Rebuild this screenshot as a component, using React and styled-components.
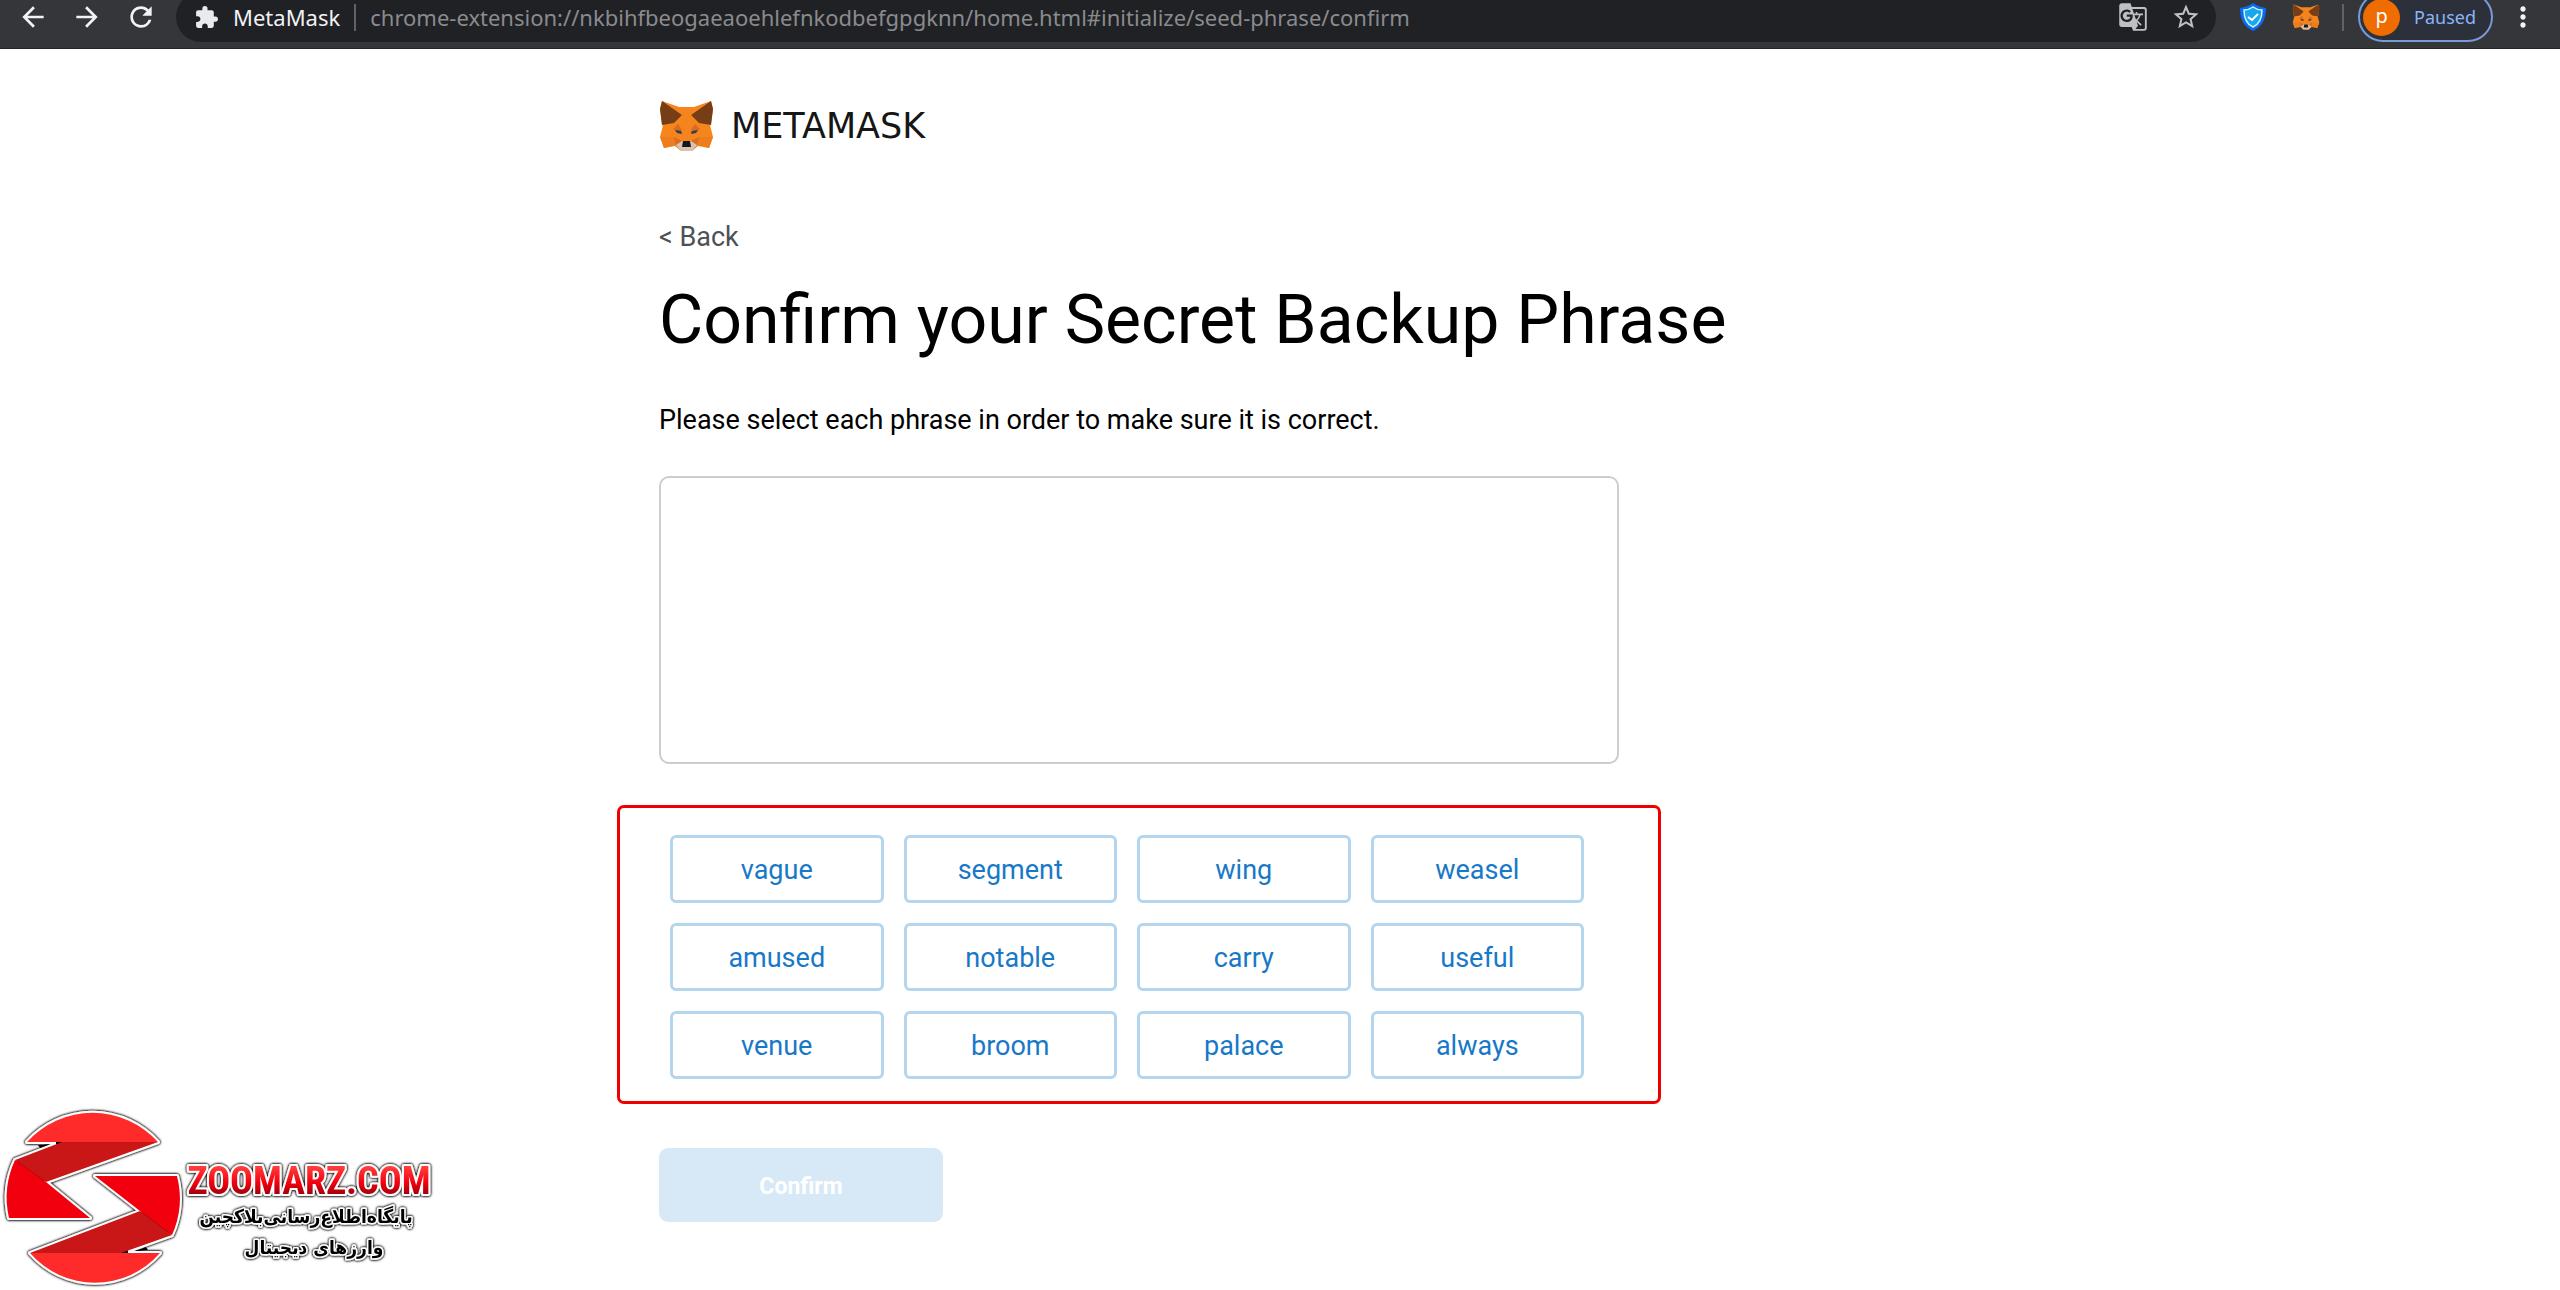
import styled, { createGlobalStyle } from "styled-components";
import {
  MdArrowBack,
  MdArrowForward,
  MdExtension,
  MdGTranslate,
  MdMoreVert,
  MdRefresh,
  MdStarBorder,
} from "react-icons/md";

const GlobalStyle = createGlobalStyle`
  * {
    box-sizing: border-box;
  }

  body {
    margin: 0;
    background: #ffffff;
    font-family: Roboto, sans-serif;
  }
`;

///////////////////////////
const Toolbar = styled.header`
  width: 100%;
  height: 49px;
  padding: 0 21px 14px 17px;
  display: flex;
  align-items: center;
  background-color: #35363a;
  border-bottom: 1px solid #222326;
  overflow: hidden;
  font-family: "Noto Sans", sans-serif;
`;

const IconButton = styled.button`
  display: flex;
  padding: 0;
  border: none;
  background: none;
  color: ${({ $muted }) => ($muted ? "#bdc1c6" : "#f1f3f4")};
  cursor: pointer;
`;

const NavButtons = styled.nav`
  display: flex;
  gap: 22px;
`;

const AddressBar = styled.div`
  flex: 1;
  height: 50px;
  margin: 0 24px 0 19px;
  padding: 0 15px 0 18px;
  display: flex;
  align-items: center;
  border-radius: 25px;
  background-color: #202124;
  color: #e8eaed;
`;

const ExtensionName = styled.span`
  margin-left: 14px;
  color: #f1f3f4;
  font-size: 22px;
`;

const Divider = styled.span`
  width: 2px;
  height: 27px;
  margin: 0 14px;
  background-color: #5f6368;
`;

const UrlInput = styled.input`
  flex: 1;
  min-width: 0;
  padding: 0;
  border: none;
  outline: none;
  background: transparent;
  color: #898b8e;
  font-family: inherit;
  font-size: 22px;
`;

const BarActions = styled.div`
  display: flex;
  align-items: center;
  gap: 23px;
`;

const Extensions = styled.div`
  margin-right: 8px;
  display: flex;
  align-items: center;
  gap: 26px;
`;

const ProfileButton = styled.button`
  height: 50px;
  margin-right: 14px;
  padding: 0 15px 0 3px;
  display: flex;
  align-items: center;
  gap: 14px;
  border: 2px solid #7a9ad6;
  border-radius: 25px;
  background-color: #2b303b;
  color: #8ab4f8;
  font-family: inherit;
  font-size: 18px;
  cursor: pointer;
`;

const Avatar = styled.span`
  width: 37px;
  height: 37px;
  border-radius: 50%;
  background-color: #ef6c00;
  color: #ffffff;
  font-size: 20px;
  line-height: 34px;
  text-align: center;
`;

///////////////////////////
const Page = styled.main`
  width: 100%;
  max-width: 1242px;
  margin: auto;
  padding-top: 51px;
`;

const Brand = styled.div`
  display: flex;
  align-items: center;
  gap: 17px;
`;

const BrandName = styled.span`
  color: #161616;
  font-family: "DejaVu Sans", sans-serif;
  font-size: 35px;
  line-height: 52px;
`;

const BackLink = styled.a`
  display: inline-block;
  margin-top: 69px;
  color: #4d5156;
  font-size: 27px;
  line-height: 32px;
  text-decoration: none;
`;

const Title = styled.h1`
  margin: 27px 0 0;
  color: #000000;
  font-size: 68px;
  font-weight: normal;
  line-height: 80px;
`;

const Description = styled.p`
  margin: 44px 0 0;
  color: #000000;
  font-size: 27px;
  line-height: 32px;
`;

const SelectedWords = styled.div`
  max-width: 960px;
  height: 288px;
  margin-top: 40px;
  border: 2px solid #cdcdcd;
  border-radius: 10px;
`;

const WordPanel = styled.section`
  max-width: 1044px;
  margin: 41px 0 0 -42px;
  padding: 27px 74px 22px 50px;
  display: grid;
  grid-template-columns: repeat(4, 1fr);
  gap: 20px;
  border: 3px solid #ee0000;
  border-radius: 7px;
`;

const WordButton = styled.button`
  height: 68px;
  padding: 2px 0 0;
  border: 3px solid #b3d6ee;
  border-radius: 6px;
  background-color: #ffffff;
  color: #1878c8;
  font-family: inherit;
  font-size: 27px;
  cursor: pointer;
`;

const ConfirmButton = styled.button`
  width: 284px;
  height: 74px;
  margin-top: 44px;
  padding: 2px 0 0;
  border: none;
  border-radius: 9px;
  background-color: #d7e9f7;
  color: #ffffff;
  font-family: inherit;
  font-size: 23px;
  font-weight: bold;
`;

const Watermark = styled.aside`
  position: fixed;
  left: 0;
  bottom: 0;
  line-height: 0;
`;

const Fox = ({ width, height }) => (
  <svg width={width} height={height} viewBox="0 0 55 52" aria-hidden="true">
    <path
      d="M3 1 20 7H35L52 1 54 9 52 24 51 25 54 37 50 48 39 46 33 51H22L16 46 5 48 1 37 4 25 3 24 1 9z"
      fill="#f6851b"
    />
    <path
      d="M3 1 23 15 15 23 3 25 1 9zM52 1 32 15 40 23 52 25 54 9z"
      fill="#763d16"
    />
    <path d="M20 7 23 15 19 27 22 33 22 40H33L33 33 36 27 32 15 35 7z" fill="#f5841f" />
    <path d="M19 24 14 29 23 34 22 28zM36 24 41 29 32 34 33 28z" fill="#d96b22" />
    <path d="M1 37H16L17 45 5 48zM54 37H39L38 45 50 48z" fill="#ee7d1d" />
    <path d="M15 37 23 41 17 46zM40 37 32 41 38 46z" fill="#d96b22" />
    <path d="M16 30 22 31 23 34 18 33zM39 30 33 31 32 34 37 33z" fill="#2f3f50" />
    <path d="M17 45 23 41H32L38 45 33 51H22z" fill="#d7c1b3" />
    <path d="M24 41H31L32 47H23z" fill="#161616" />
  </svg>
);

const Shield = () => (
  <svg width="26" height="28" viewBox="0 0 26 28" aria-hidden="true">
    <path
      d="M13 0C17 3 21 4 26 5 26 15 23 23 13 28 3 23 0 15 0 5 5 4 9 3 13 0z"
      fill="#0a6cf5"
    />
    <path
      d="M13 4C16 6 19 7 22 7 22 15 20 21 13 24 6 21 4 15 4 7 7 7 10 6 13 4z"
      fill="#19a7ee"
      stroke="#d4f3ff"
      strokeWidth="1.5"
    />
    <path d="M8 14 12 17 18 11" fill="none" stroke="#ffffff" strokeWidth="2" />
  </svg>
);

const ZoomarzLogo = () => (
  <svg width="450" height="190" viewBox="0 0 450 190">
    <defs>
      <linearGradient id="zoomarz-red" x1="0" y1="0" x2="0" y2="1">
        <stop offset="0.2" stopColor="#ff3a3a" />
        <stop offset="0.55" stopColor="#f2000d" />
        <stop offset="0.85" stopColor="#8e0006" />
      </linearGradient>
      <filter id="zoomarz-glow" x="-10%" y="-10%" width="120%" height="120%">
        <feDropShadow dx="0" dy="0" stdDeviation="1" floodColor="#000000" />
        <feDropShadow dx="0" dy="0" stdDeviation="1" floodColor="#000000" />
      </filter>
    </defs>
    <g filter="url(#zoomarz-glow)">
      <g stroke="#ffffff" strokeWidth="4" strokeLinejoin="round">
        <path d="M27 42A88 88 0 0 1 158 42L46 82 90 118H9A90 90 0 0 1 15 60L54 45V42z" />
        <path d="M30 153A86 86 0 0 0 160 153H130V150L172 135A90 90 0 0 0 177 76H95L140 111z" />
      </g>
    </g>
    <path d="M27 42A88 88 0 0 1 158 42z" fill="#ff2a2a" />
    <path d="M15 60 62 42H158L46 82z" fill="#c91616" />
    <path d="M15 60 46 82 90 118H9A90 90 0 0 1 15 60z" fill="#f2000d" />
    <path d="M95 76H177A90 90 0 0 1 172 135L140 111z" fill="#f2000d" />
    <path d="M140 111 172 135 121 153H30z" fill="#c91616" />
    <path d="M30 153H160A86 86 0 0 1 30 153z" fill="#ff2a2a" />
    <path d="M38 45H48L40 48zM136 151 146 147 148 150z" fill="#000000" />
    <g
      filter="url(#zoomarz-glow)"
      stroke="#ffffff"
      strokeWidth="4"
      strokeLinejoin="round"
      paintOrder="stroke"
      fontWeight="bold"
      textAnchor="middle"
    >
      <text
        x="309"
        y="94"
        fill="url(#zoomarz-red)"
        fontFamily="'Liberation Sans Narrow', 'Roboto Condensed', Roboto, sans-serif"
        fontSize="38"
      >
        ZOOMARZ.COM
      </text>
      <g
        fill="#000000"
        strokeWidth="3"
        fontFamily="'DejaVu Sans Condensed', 'DejaVu Sans', sans-serif"
        fontSize="19"
        direction="rtl"
      >
        <text x="306" y="123">
          پایگاه‌اطلاع‌رسانی‌بلاکچین
        </text>
        <text x="314" y="154">
          وارزهای دیجیتال
        </text>
      </g>
    </g>
  </svg>
);

const words = [
  "vague",
  "segment",
  "wing",
  "weasel",
  "amused",
  "notable",
  "carry",
  "useful",
  "venue",
  "broom",
  "palace",
  "always",
];

const BrowserBar = () => (
  <Toolbar>
    <NavButtons>
      <IconButton aria-label="Back">
        <MdArrowBack size={32} />
      </IconButton>
      <IconButton aria-label="Forward">
        <MdArrowForward size={32} />
      </IconButton>
      <IconButton aria-label="Reload">
        <MdRefresh size={32} />
      </IconButton>
    </NavButtons>
    <AddressBar>
      <MdExtension size={25} />
      <ExtensionName>MetaMask</ExtensionName>
      <Divider />
      <UrlInput
        aria-label="Address"
        defaultValue="chrome-extension://nkbihfbeogaeaoehlefnkodbefgpgknn/home.html#initialize/seed-phrase/confirm"
      />
      <BarActions>
        <IconButton $muted aria-label="Translate">
          <MdGTranslate size={30} />
        </IconButton>
        <IconButton $muted aria-label="Bookmark">
          <MdStarBorder size={30} />
        </IconButton>
      </BarActions>
    </AddressBar>
    <Extensions>
      <IconButton aria-label="Shield">
        <Shield />
      </IconButton>
      <IconButton aria-label="MetaMask">
        <Fox width={28} height={26} />
      </IconButton>
    </Extensions>
    <Divider />
    <ProfileButton>
      <Avatar>p</Avatar>
      Paused
    </ProfileButton>
    <IconButton aria-label="Menu">
      <MdMoreVert size={32} />
    </IconButton>
  </Toolbar>
);

const App = () => {
  return (
    <>
      <GlobalStyle />
      <BrowserBar />
      <Page>
        <Brand>
          <Fox width={55} height={52} />
          <BrandName>METAMASK</BrandName>
        </Brand>
        <BackLink href="#back">&lt; Back</BackLink>
        <Title>Confirm your Secret Backup Phrase</Title>
        <Description>
          Please select each phrase in order to make sure it is correct.
        </Description>
        <SelectedWords />
        <WordPanel>
          {words.map((word) => (
            <WordButton key={word}>{word}</WordButton>
          ))}
        </WordPanel>
        <ConfirmButton>Confirm</ConfirmButton>
      </Page>
      <Watermark>
        <ZoomarzLogo />
      </Watermark>
    </>
  );
};

export default App;
